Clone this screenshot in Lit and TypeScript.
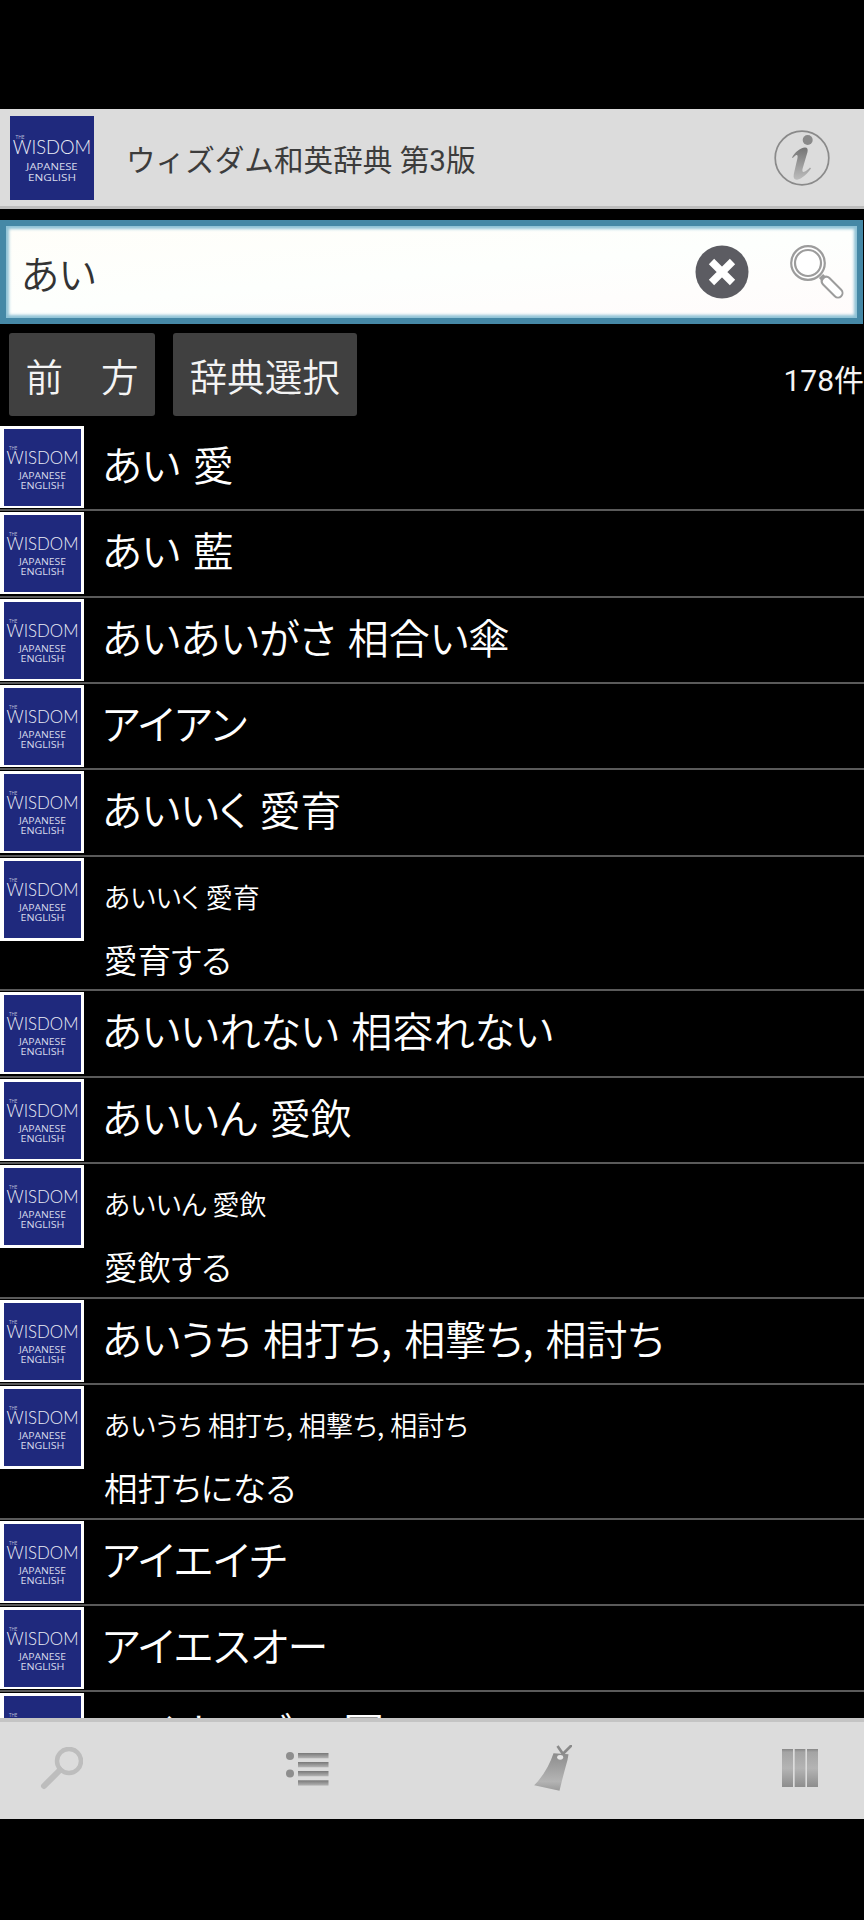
import { LitElement, html, css, svg } from "lit";
import { customElement } from "lit/decorators.js";

@customElement("wis-logo")
class WisLogo extends LitElement {
  static styles = css`
    :host { display: block; width: 77px; height: 77px; }
    svg { display: block; width: 100%; height: 100%; }
    .bg { fill: #1f297d; }
    text { fill: #d8dbec; text-anchor: middle; font-family: "Open Sans", "Liberation Sans", sans-serif; font-weight: 400; }
    .the { font-size: 4.500px; text-anchor: start; fill: #b9bedb; }
    .wis { font-size: 17px; fill: #eceef7; font-family: "Lato", "Liberation Sans", sans-serif; font-weight: 300; }
    .jp { font-size: 9px; }
  `;
  render() {
    return html`<svg viewBox="0 0 77 77" aria-hidden="true">
      <rect class="bg" width="77" height="77"></rect>
      <text class="the" x="5" y="21">THE</text>
      <text class="wis" x="38.500" y="35" textLength="72" lengthAdjust="spacingAndGlyphs">WISDOM</text>
      <text class="jp" x="38.500" y="49.500" textLength="47" lengthAdjust="spacingAndGlyphs">JAPANESE</text>
      <text class="jp" x="38.500" y="60" textLength="44" lengthAdjust="spacingAndGlyphs">ENGLISH</text>
    </svg>`;
  }
}

interface Entry { title?: string; small?: string; sub?: string; }

const ENTRIES: Entry[] = [
  { title: "あい 愛" },
  { title: "あい 藍" },
  { title: "あいあいがさ 相合い傘" },
  { title: "アイアン" },
  { title: "あいいく 愛育" },
  { small: "あいいく 愛育", sub: "愛育する" },
  { title: "あいいれない 相容れない" },
  { title: "あいいん 愛飲" },
  { small: "あいいん 愛飲", sub: "愛飲する" },
  { title: "あいうち 相打ち, 相撃ち, 相討ち" },
  { small: "あいうち 相打ち, 相撃ち, 相討ち", sub: "相打ちになる" },
  { title: "アイエイチ" },
  { title: "アイエスオー" },
  { title: "アイオーデー 国" },
];

const infoIcon = svg`<svg class="info" viewBox="0 0 58 58" aria-hidden="true">
  <defs><linearGradient id="ig" x1="0" y1="0" x2="0" y2="1"><stop offset="0" stop-color="#747474"/><stop offset="1" stop-color="#bcbcbc"/></linearGradient></defs>
  <circle cx="29" cy="29" r="26.800" fill="none" stroke="#8a8a8a" stroke-width="1.700"/>
  <circle cx="34.700" cy="11" r="5" fill="#8a8a8a"/>
  <path d="M19 28.500C22 23 27 19 32 18.500C34.500 18.500 35 20 34.500 23L29.500 40C29 43 30 43.500 32 42.500C33.500 41.800 35.500 40 37 38.500L38 39.500C34 45 29 49.500 25 50.500C21.500 51.300 20 49.500 20.800 45L24.500 29C25 26 24 25.500 22.500 26.500C21.500 27.200 20.500 28 19.800 29Z" fill="url(#ig)"/>
</svg>`;

const clearIcon = svg`<svg class="clear" viewBox="0 0 54 54" aria-hidden="true">
  <circle cx="27" cy="27" r="26.500" fill="#5c5c62"/>
  <path d="M16.500 16.500l21 21M37.500 16.500l-21 21" stroke="#fff" stroke-width="7.500" fill="none"/>
</svg>`;

const searchIcon = svg`<svg class="lens" viewBox="0 0 54 54" aria-hidden="true">
  <path d="M31 31L46 46" stroke="#9c9c9c" stroke-width="6" />
  <path d="M36 36L48 48" stroke="#9c9c9c" stroke-width="11" stroke-linecap="round"/>
  <path d="M36.500 36.500L48 48" stroke="#fff" stroke-width="7" stroke-linecap="round"/>
  <circle cx="18" cy="18" r="16.800" fill="#fff" stroke="#9c9c9c" stroke-width="2.200"/>
  <circle cx="18" cy="18" r="13" fill="#fff" stroke="#9c9c9c" stroke-width="2.200"/>
</svg>`;

const navSearch = svg`<svg class="nav n1" viewBox="0 0 43 43" aria-hidden="true">
  <circle cx="29" cy="14" r="12" fill="none" stroke="#bdbdbd" stroke-width="4.500"/>
  <path d="M20 23L4 39" stroke="#bdbdbd" stroke-width="6" stroke-linecap="round"/>
</svg>`;

const navList = svg`<svg class="nav n2" viewBox="0 0 43 35" aria-hidden="true">
  <defs><linearGradient id="lg" x1="0" y1="0" x2="0" y2="1"><stop offset="0" stop-color="#787878"/><stop offset="1" stop-color="#b4b4b4"/></linearGradient></defs>
  <circle cx="4" cy="5" r="4" fill="#8e8e8e"/><circle cx="4" cy="22.500" r="4" fill="#8e8e8e"/>
  <rect x="12" y="2" width="30.500" height="5.300" fill="url(#lg)"/>
  <rect x="12" y="11" width="30.500" height="5.300" fill="url(#lg)"/>
  <rect x="12" y="20" width="30.500" height="5.300" fill="url(#lg)"/>
  <rect x="12" y="29.300" width="30.500" height="5.300" fill="url(#lg)"/>
</svg>`;

const navTag = svg`<svg class="nav n3" viewBox="42 35 113 137" aria-hidden="true">
  <defs><linearGradient id="tg" x1="0" y1="0" x2="0" y2="1"><stop offset="0" stop-color="#8c8c8c"/><stop offset=".75" stop-color="#b4b4b4"/><stop offset="1" stop-color="#9a9a9a"/></linearGradient></defs>
  <path d="M112 38L130 64M155 35L128 62" stroke="#8a8a8a" stroke-width="8" fill="none"/>
  <path d="M100 60L145 63L142 80Q128 130 118 172L42 156Q82 115 100 60Z" fill="url(#tg)"/>
  <ellipse cx="120" cy="72" rx="9" ry="7" fill="#e6e6e6"/>
</svg>`;

const navCols = svg`<svg class="nav n4" viewBox="0 0 37 38.500" aria-hidden="true">
  <defs><linearGradient id="cg" x1="0" y1="0" x2="0" y2="1"><stop offset="0" stop-color="#868686"/><stop offset=".08" stop-color="#a4a4a4"/><stop offset=".5" stop-color="#b4b4b4"/><stop offset="1" stop-color="#8c8c8c"/></linearGradient></defs>
  <rect x="0" y="0" width="11" height="38.500" fill="url(#cg)"/>
  <rect x="12.700" y="0" width="10.700" height="38.500" fill="url(#cg)"/>
  <rect x="25" y="0" width="11" height="38.500" fill="url(#cg)"/>
</svg>`;

@customElement("app-root")
class AppRoot extends LitElement {
  static styles = css`
    :host {
      display: block; width: 864px; height: 1920px; background: #000; overflow: hidden;
      font-family: "Noto Sans CJK JP", "Noto Sans", sans-serif; font-weight: 350;
    }
    .page { display: flex; flex-direction: column; height: 100%; padding: 109px 0 101px; box-sizing: border-box; }
    .appbar {
      height: 100px; box-sizing: border-box; background: #dcdcdc; border-bottom: 3px solid #bdbdbd;
      display: flex; align-items: center; padding: 0 33px 0 10px; flex: none;
    }
    .appbar wis-logo { width: 84px; height: 84px; margin-top: 1px; }
    .apptitle {
      margin-left: 32px; font-size: 29.600px; color: #3c3c3c; flex: 1; line-height: 1; padding-top: 9px;
      font-family: Roboto, "Noto Sans CJK JP", sans-serif; font-weight: 400;
    }
    .info { width: 58px; height: 58px; display: block; }
    .search {
      margin-top: 11px; height: 104px; box-sizing: border-box; flex: none; margin-right: 1px;
      border: 6px solid #4588a6;
      background: linear-gradient(175deg, #fffef9, #fdfffd 50%, #fffbfb);
      box-shadow: inset 0 0 3px 3px #8fc2d6;
      display: flex; align-items: center; padding: 0 13px 0 15px;
    }
    .query { flex: 1; font-size: 39px; color: #333; line-height: 1; font-feature-settings: "palt"; }
    .clear { width: 54px; height: 54px; display: block; margin-right: 41px; }
    .lens { width: 54px; height: 54px; display: block; }
    .tools { display: flex; align-items: center; gap: 17.500px; height: 83px; margin-top: 9px; padding-left: 9px; flex: none; }
    .btn {
      height: 83px; box-sizing: border-box; background: #404040; border-radius: 3px; color: #f4f4f4;
      display: flex; align-items: center; justify-content: center; font-size: 37.500px; line-height: 1;
    }
    .b1 { width: 146px; gap: 38px; }
    .b2 { width: 184.500px; }
    .count {
      margin-left: auto; color: #f4f4f4; font-size: 30px; line-height: 1; padding-top: 12px;
      font-family: Roboto, "Noto Sans CJK JP", sans-serif; font-weight: 400;
    }
    .list { flex: 1; min-height: 0; overflow: hidden; margin-top: 9px; }
    .row { border-bottom: 2px solid #5a5a5a; height: 86.330px; box-sizing: border-box; display: flex; align-items: flex-start; }
    .row.two { height: 134.700px; }
    .thumb { background: #fff; width: 84px; height: 83px; padding: 3px 3px 0 3.500px; box-sizing: border-box; flex: none; margin-top: 1px; }
    .row:not(.two) .thumb { height: 82px; }
    .text { margin-left: 20px; color: #fff; flex: 1; min-width: 0; font-feature-settings: "palt"; }
    .title { font-size: 41px; line-height: 76px; white-space: nowrap; margin-left: -2px; word-spacing: 3px; }
    .small { font-size: 27px; line-height: 80px; white-space: nowrap; }
    .sub { font-size: 33.500px; line-height: 43px; white-space: nowrap; }
    .bottom {
      flex: none; height: 101px; box-sizing: border-box; background: #dcdcdc; border-top: 4px solid #c4c4c4;
      display: flex; align-items: center; padding: 0 0 5px 40px;
    }
    .nav { display: block; flex: none; }
    .n1 { width: 43px; height: 43px; }
    .n2 { width: 43px; height: 35px; margin-left: 202.700px; }
    .n3 { width: 38px; height: 45.700px; margin-left: 205px; }
    .n4 { width: 37px; height: 38.500px; margin-left: 210px; }
  `;

  renderRow(e: Entry) {
    return html`<div class="row ${e.sub ? "two" : ""}">
      <div class="thumb"><wis-logo></wis-logo></div>
      <div class="text">
        ${e.title ? html`<div class="title">${e.title}</div>` : ""}
        ${e.small ? html`<div class="small">${e.small}</div>` : ""}
        ${e.sub ? html`<div class="sub">${e.sub}</div>` : ""}
      </div>
    </div>`;
  }

  render() {
    return html`<div class="page">
      <header class="appbar">
        <wis-logo></wis-logo>
        <div class="apptitle">ウィズダム和英辞典 第3版</div>
        ${infoIcon}
      </header>
      <div class="search">
        <div class="query">あい</div>
        ${clearIcon}
        ${searchIcon}
      </div>
      <div class="tools">
        <div class="btn b1"><span>前</span><span>方</span></div>
        <div class="btn b2">辞典選択</div>
        <div class="count">178件</div>
      </div>
      <div class="list">${ENTRIES.map((e) => this.renderRow(e))}</div>
      <nav class="bottom">
        ${navSearch}${navList}${navTag}${navCols}
      </nav>
    </div>`;
  }
}
